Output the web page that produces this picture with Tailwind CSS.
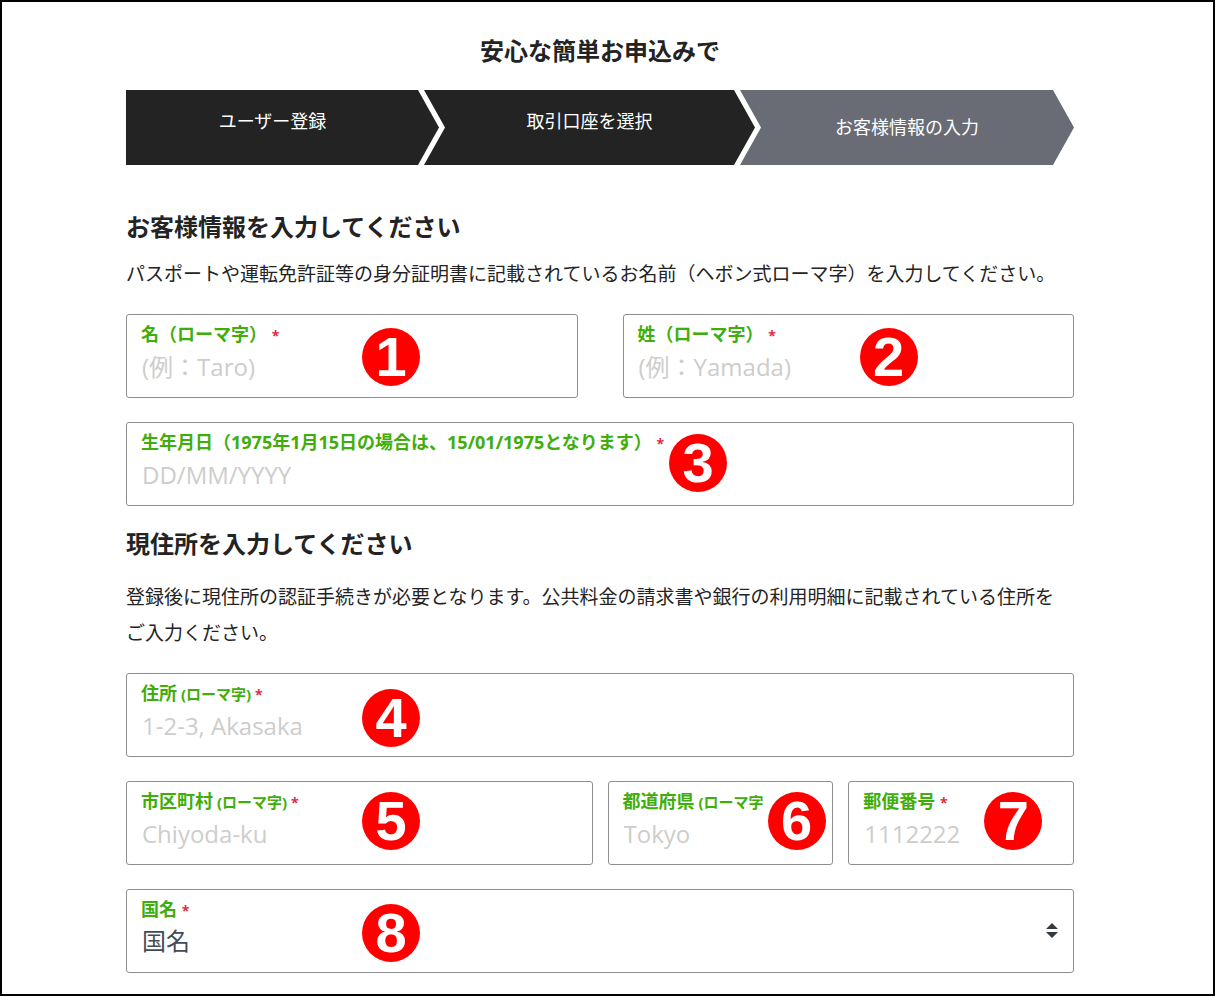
<!DOCTYPE html>
<html lang="ja">
<head>
<meta charset="utf-8">
<title>お客様情報の入力</title>
<script src="https://cdn.jsdelivr.net/npm/@tailwindcss/browser@4"></script>
</head>
<body class="min-h-screen border-2 border-black bg-white pt-[31px] pr-[139px] pb-5 pl-[124px] font-['Open_Sans','Noto_Sans_CJK_JP',sans-serif] text-[#232323]">
<main>
  <h1 class="text-center text-2xl leading-9 font-bold">安心な簡単お申込みで</h1>

  <ol class="mt-[21px] flex h-[75px] text-lg text-white">
    <li class="flex flex-[313] items-center justify-center bg-[#232323] [clip-path:polygon(0_0,calc(100%-21px)_0,100%_50%,calc(100%-21px)_100%,0_100%)]"><span class="pr-5 pb-3.5">ユーザー登録</span></li>
    <li class="-ml-[15px] flex flex-[331] items-center justify-center bg-[#232323] [clip-path:polygon(0_0,calc(100%-21px)_0,100%_50%,calc(100%-21px)_100%,0_100%,21px_50%)]"><span class="pb-3.5">取引口座を選択</span></li>
    <li class="-ml-[15px] flex flex-[334] items-center justify-center bg-[#696c75] [clip-path:polygon(0_0,calc(100%-21px)_0,100%_50%,calc(100%-21px)_100%,0_100%,21px_50%)]" aria-current="step"><span class="pb-0.5">お客様情報の入力</span></li>
  </ol>

  <form>
    <h2 class="mt-11 text-2xl leading-9 font-bold">お客様情報を入力してください</h2>
    <p class="mt-[11px] text-[19px] leading-9">パスポートや運転免許証等の身分証明書に記載されているお名前（ヘボン式ローマ字）を入力してください。</p>

    <div class="mt-[22px] grid grid-cols-2 gap-[45px]">
      <div class="relative rounded-[3px] border border-[#8f8f92] px-3.5 pt-[5px] pb-3">
        <label for="first" class="block h-[27px] text-lg leading-7 font-bold whitespace-nowrap text-[#3fae0a]">名（ローマ字） <span class="text-sm leading-none text-[#e02b45]">*</span></label>
        <input id="first" type="text" placeholder="(例：Taro)" class="block h-[38px] w-full px-px text-2xl outline-none placeholder:text-[#cdcdcb]">
        <span class="absolute top-[13px] left-[235px] flex size-[58px] items-center justify-center rounded-full bg-[#ff0000] font-['Liberation_Sans',sans-serif] text-[56px] leading-none font-bold text-white">1</span>
      </div>
      <div class="relative rounded-[3px] border border-[#8f8f92] px-3.5 pt-[5px] pb-3">
        <label for="last" class="block h-[27px] text-lg leading-7 font-bold whitespace-nowrap text-[#3fae0a]">姓（ローマ字） <span class="text-sm leading-none text-[#e02b45]">*</span></label>
        <input id="last" type="text" placeholder="(例：Yamada)" class="block h-[38px] w-full px-px text-2xl outline-none placeholder:text-[#cdcdcb]">
        <span class="absolute top-[13px] left-[236px] flex size-[58px] items-center justify-center rounded-full bg-[#ff0000] font-['Liberation_Sans',sans-serif] text-[56px] leading-none font-bold text-white">2</span>
      </div>
    </div>

    <div class="relative mt-6 rounded-[3px] border border-[#8f8f92] px-3.5 pt-[5px] pb-3">
      <label for="birth" class="block h-[27px] text-lg leading-7 font-bold whitespace-nowrap text-[#3fae0a]">生年月日（1975年1月15日の場合は、15/01/1975となります） <span class="text-sm leading-none text-[#e02b45]">*</span></label>
      <input id="birth" type="text" placeholder="DD/MM/YYYY" class="block h-[38px] w-full px-px text-2xl outline-none placeholder:text-[#cdcdcb]">
      <span class="absolute top-[11px] left-[542px] flex size-[58px] items-center justify-center rounded-full bg-[#ff0000] font-['Liberation_Sans',sans-serif] text-[56px] leading-none font-bold text-white">3</span>
    </div>

    <h2 class="mt-5 text-2xl leading-9 font-bold">現住所を入力してください</h2>
    <p class="mt-[17px] pr-3 text-[19px] leading-9">登録後に現住所の認証手続きが必要となります。公共料金の請求書や銀行の利用明細に記載されている住所をご入力ください。</p>

    <div class="relative mt-[22px] rounded-[3px] border border-[#8f8f92] px-3.5 pt-[5px] pb-3">
      <label for="street" class="block h-[27px] text-lg leading-7 font-bold whitespace-nowrap text-[#3fae0a]">住所<span class="text-[15px]"> (ローマ字) </span><span class="text-sm leading-none text-[#e02b45]">*</span></label>
      <input id="street" type="text" placeholder="1-2-3, Akasaka" class="block h-[38px] w-full px-px text-2xl outline-none placeholder:text-[#cdcdcb]">
      <span class="absolute top-[15px] left-[235px] flex size-[58px] items-center justify-center rounded-full bg-[#ff0000] font-['Liberation_Sans',sans-serif] text-[56px] leading-none font-bold text-white">4</span>
    </div>

    <div class="mt-6 grid grid-cols-4 gap-[15px]">
      <div class="relative col-span-2 rounded-[3px] border border-[#8f8f92] px-3.5 pt-[5px] pb-3">
        <label for="city" class="block h-[27px] text-lg leading-7 font-bold whitespace-nowrap text-[#3fae0a]">市区町村<span class="text-[15px]"> (ローマ字) </span><span class="text-sm leading-none text-[#e02b45]">*</span></label>
        <input id="city" type="text" placeholder="Chiyoda-ku" class="block h-[38px] w-full px-px text-2xl outline-none placeholder:text-[#cdcdcb]">
        <span class="absolute top-2.5 left-[235px] flex size-[58px] items-center justify-center rounded-full bg-[#ff0000] font-['Liberation_Sans',sans-serif] text-[56px] leading-none font-bold text-white">5</span>
      </div>
      <div class="relative rounded-[3px] border border-[#8f8f92] px-3.5 pt-[5px] pb-3">
        <label for="pref" class="block h-[27px] text-lg leading-7 font-bold whitespace-nowrap text-[#3fae0a]">都道府県<span class="text-[15px]"> (ローマ字</span></label>
        <input id="pref" type="text" placeholder="Tokyo" class="block h-[38px] w-full px-px text-2xl outline-none placeholder:text-[#cdcdcb]">
        <span class="absolute top-2.5 left-[159px] flex size-[58px] items-center justify-center rounded-full bg-[#ff0000] font-['Liberation_Sans',sans-serif] text-[56px] leading-none font-bold text-white">6</span>
      </div>
      <div class="relative rounded-[3px] border border-[#8f8f92] px-3.5 pt-[5px] pb-3">
        <label for="zip" class="block h-[27px] text-lg leading-7 font-bold whitespace-nowrap text-[#3fae0a]">郵便番号 <span class="text-sm leading-none text-[#e02b45]">*</span></label>
        <input id="zip" type="text" placeholder="1112222" class="block h-[38px] w-full px-px text-2xl outline-none placeholder:text-[#cdcdcb]">
        <span class="absolute top-2.5 left-[135px] flex size-[58px] items-center justify-center rounded-full bg-[#ff0000] font-['Liberation_Sans',sans-serif] text-[56px] leading-none font-bold text-white">7</span>
      </div>
    </div>

    <div class="relative mt-6 rounded-[3px] border border-[#8f8f92] px-3.5 pt-[5px] pb-3">
      <label for="country" class="block h-[27px] text-lg leading-7 font-bold whitespace-nowrap text-[#3fae0a]">国名 <span class="text-sm leading-none text-[#e02b45]">*</span></label>
      <select id="country" class="block h-[38px] w-full appearance-none bg-transparent px-px text-2xl text-[#434b55] outline-none"><option>国名</option></select>
      <svg class="pointer-events-none absolute top-[33px] right-[15px] h-[15px] w-3" viewBox="0 0 12 15" fill="#343a40" aria-hidden="true"><path d="M6 0 12 6H0zM6 15 0 9h12z"/></svg>
      <span class="absolute top-3.5 left-[235px] flex size-[58px] items-center justify-center rounded-full bg-[#ff0000] font-['Liberation_Sans',sans-serif] text-[56px] leading-none font-bold text-white">8</span>
    </div>
  </form>
</main>
</body>
</html>
